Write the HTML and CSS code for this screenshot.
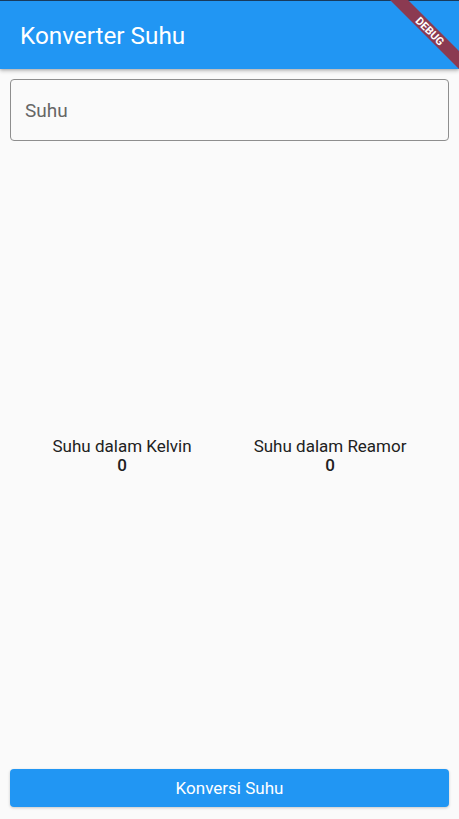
FILE: index.html
```html
<!DOCTYPE html>
<html lang="id">
<head>
<meta charset="utf-8">
<title>Konverter Suhu</title>
<link rel="stylesheet" href="styles.css">
</head>
<body>
<div class="app">
  <header class="appbar">
    <h1 class="title">Konverter Suhu</h1>
  </header>
  <main class="content">
    <div class="field">
      <input class="input" type="text" placeholder="Suhu">
    </div>
    <div class="results">
      <div class="result">
        <div class="label">Suhu dalam Kelvin</div>
        <div class="value">0</div>
      </div>
      <div class="result">
        <div class="label">Suhu dalam Reamor</div>
        <div class="value">0</div>
      </div>
    </div>
    <button class="button" type="button">Konversi Suhu</button>
  </main>
  <svg class="banner" width="80" height="70" viewBox="0 0 80 70" aria-hidden="true">
    <polygon points="11,0 29,0 80,51 80,69" fill="#8b3a51"/>
    <text x="51" y="35" transform="rotate(45 51 31)" text-anchor="middle" class="banner-text">DEBUG</text>
  </svg>
</div>
</body>
</html>
```
FILE: styles.css
```css
* { box-sizing: border-box; }
html, body { margin: 0; padding: 0; }
body {
  width: 459px;
  height: 819px;
  background: #fafafa;
  font-family: Roboto, "Noto Sans", sans-serif;
  overflow: hidden;
}
.app {
  position: relative;
  height: 819px;
  display: flex;
  flex-direction: column;
}
.appbar {
  height: 69px;
  background: #2196f3;
  border-top: 1px solid #183a5c;
  display: flex;
  align-items: center;
  padding-left: 20px;
  box-shadow: 0 2px 4px rgba(0,0,0,0.22), 0 1px 2px rgba(0,0,0,0.12);
  position: relative;
  z-index: 1;
  flex: none;
}
.title {
  margin: 0;
  font-weight: 400;
  font-size: 24.3px;
  color: #fff;
  letter-spacing: 0;
}
.content {
  flex: 1;
  display: flex;
  flex-direction: column;
  padding: 10px 10px 12px;
}
.field { flex: none; }
.input {
  display: block;
  width: 100%;
  height: 62px;
  border: 1px solid #8e8e8e;
  border-radius: 4px;
  background: transparent;
  padding: 0 14px;
  font-family: Roboto, sans-serif;
  font-size: 19px;
  color: #222;
  outline: none;
}
.input::placeholder { color: #666; }
.results {
  flex: 1;
  display: flex;
  align-items: center;
  justify-content: center;
  gap: 62px;
  padding-top: 2px;
}
.result {
  text-align: center;
  color: #212121;
}
.label { font-size: 17px; line-height: 19px; }
.value { font-size: 17px; line-height: 19px; font-weight: 500; }
.button {
  flex: none;
  height: 38px;
  width: 100%;
  border: none;
  border-radius: 4px;
  background: #2196f3;
  color: #fff;
  font-family: Roboto, sans-serif;
  font-size: 17px;
  box-shadow: 0 1px 3px rgba(0,0,0,0.2);
}
.banner {
  position: absolute;
  top: 0;
  right: 0;
  z-index: 2;
}
.banner-text {
  fill: #fff;
  font-family: Roboto, sans-serif;
  font-weight: 700;
  font-size: 11px;
}
```
